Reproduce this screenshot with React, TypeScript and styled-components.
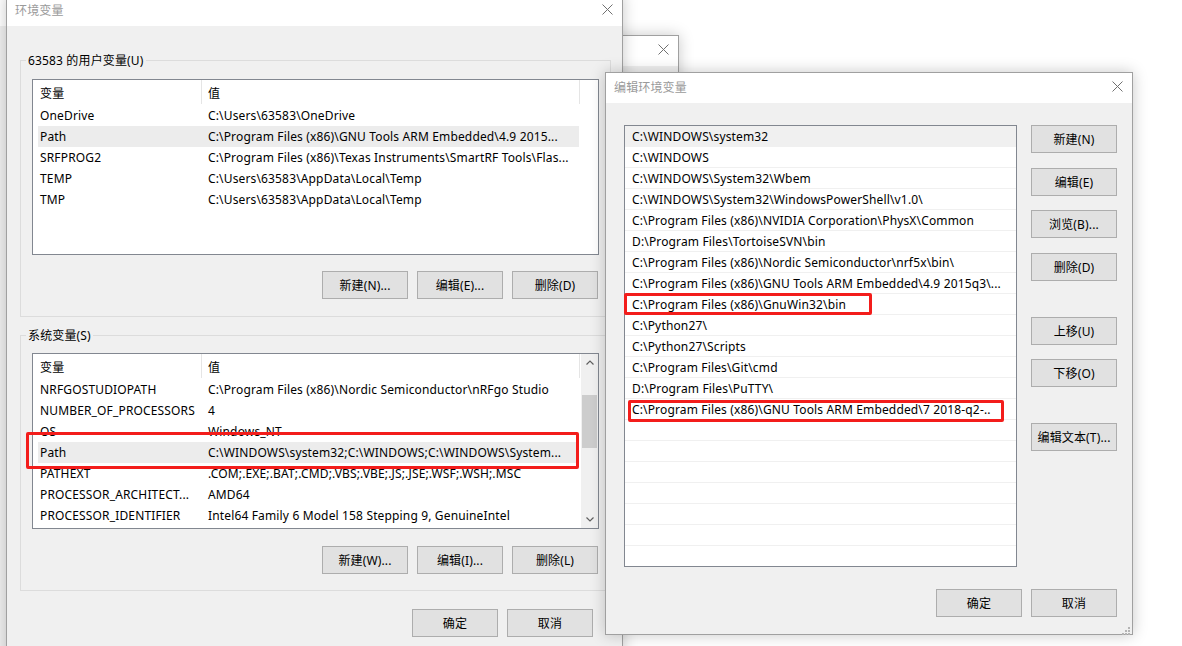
import React from "react";
import styled, { createGlobalStyle } from "styled-components";

const GlobalStyle = createGlobalStyle`
  html, body {
    margin: 0;
    padding: 0;
    background: #ffffff;
  }
  body {
    width: 1182px;
    height: 646px;
    overflow: hidden;
    font-family: "Noto Sans", "Noto Sans CJK SC", sans-serif;
    font-size: 12px;
    letter-spacing: 0.15px;
    color: #000;
  }
`;

const Desktop = styled.div`
    position: relative;
    width: 1182px;
    height: 646px;
    overflow: hidden;
    background: #ffffff;
`;

const Window = styled.div<{ $x: number; $y: number; $w: number; $h: number }>`
    position: absolute;
    left: ${p => p.$x}px;
    top: ${p => p.$y}px;
    width: ${p => p.$w}px;
    height: ${p => p.$h}px;
    box-sizing: border-box;
    background: #f0f0f0;
    border: 1px solid #a0a0a0;
    box-shadow: 0 0 14px rgba(0, 0, 0, 0.22);
    display: flex;
    flex-direction: column;
`;

const TitleBar = styled.div<{ $pad: number }>`
    box-sizing: border-box;
    height: 30px;
    flex: none;
    background: #ffffff;
    display: flex;
    align-items: center;
    justify-content: space-between;
    padding-left: ${p => p.$pad}px;
    padding-bottom: 4px;
    color: #9a9a9a;
    font-family: "Noto Sans CJK SC", sans-serif;
    font-size: 12px;
`;

const CloseBox = styled.div`
    width: 30px;
    height: 26px;
    display: flex;
    align-items: center;
    justify-content: center;
`;

const MainBody = styled.div`
    display: flex;
    flex-direction: column;
    padding: 0 11px 0 13px;
`;

const Group = styled.div<{ $top: number; $h: number; $padTop: number }>`
    position: relative;
    box-sizing: border-box;
    margin-top: ${p => p.$top}px;
    height: ${p => p.$h}px;
    border: 1px solid #dcdcdc;
    padding: ${p => p.$padTop}px 11px 0 11px;
    display: flex;
    flex-direction: column;
`;

const Legend = styled.span`
    position: absolute;
    top: -9px;
    left: 5px;
    padding: 0 2px;
    line-height: 17px;
    background: #f0f0f0;
    white-space: nowrap;
`;

const ListView = styled.div`
    box-sizing: border-box;
    height: 176px;
    border: 1px solid #828790;
    background: #ffffff;
    display: flex;
    overflow: hidden;
`;

const ListMain = styled.div`
    flex: 1;
    min-width: 0;
    display: flex;
    flex-direction: column;
`;

const Header = styled.div`
    display: flex;
    height: 25px;
    flex: none;
`;

const HeaderCell = styled.div<{ $w: number; $pad: number }>`
    box-sizing: border-box;
    width: ${p => p.$w}px;
    height: 24px;
    padding-left: ${p => p.$pad}px;
    border-right: 1px solid #e5e5e5;
    display: flex;
    align-items: center;
    font-family: "Noto Sans CJK SC", sans-serif;
`;

const Row = styled.div<{ $selected?: boolean }>`
    display: grid;
    grid-template-columns: 164px 1fr;
    height: 21px;
    width: 541px;
    margin-left: 5px;
    align-items: center;
    background: ${p => (p.$selected ? "#ececec" : "transparent")};
`;

const Cell = styled.div<{ $pad: number }>`
    padding-left: ${p => p.$pad}px;
    white-space: nowrap;
    overflow: hidden;
`;

const ScrollBar = styled.div`
    width: 17px;
    flex: none;
    background: #f0f0f0;
    display: flex;
    flex-direction: column;
    align-items: center;
`;

const ScrollArrow = styled.div`
    height: 17px;
    width: 17px;
    display: flex;
    align-items: center;
    justify-content: center;
`;

const ScrollThumb = styled.div`
    width: 15px;
    height: 53px;
    margin-top: 24px;
    background: #cdcdcd;
`;

const ScrollSpacer = styled.div`
    flex: 1;
`;

const ButtonRow = styled.div<{ $top: number; $right?: number }>`
    display: flex;
    justify-content: flex-end;
    gap: 9px;
    margin-top: ${p => p.$top}px;
    padding-right: ${p => p.$right ?? 0}px;
`;

const Button = styled.button<{ $gap?: number }>`
    box-sizing: border-box;
    width: 86px;
    height: 28px;
    margin: ${p => p.$gap ?? 0}px 0 0 0;
    padding: 0;
    background: #e1e1e1;
    border: 1px solid #adadad;
    border-radius: 0;
    color: #000;
    font-family: "Noto Sans", "Noto Sans CJK SC", sans-serif;
    font-size: 12px;
    letter-spacing: 0.15px;
    display: flex;
    align-items: center;
    justify-content: center;
    flex: none;
`;

const EditBody = styled.div`
    display: flex;
    padding: 22px 15px 0 18px;
`;

const PathList = styled.div`
    box-sizing: border-box;
    width: 393px;
    height: 442px;
    border: 1px solid #828790;
    background: #ffffff;
    overflow: hidden;
`;

const PathRow = styled.div<{ $selected?: boolean }>`
    box-sizing: border-box;
    height: 21px;
    padding-left: 7px;
    display: flex;
    align-items: center;
    white-space: nowrap;
    overflow: hidden;
    border-bottom: 1px solid #f0f0f0;
    background: ${p => (p.$selected ? "#f0f0f0" : "#ffffff")};
`;

const SideButtons = styled.div`
    display: flex;
    flex-direction: column;
    margin-left: 14px;
`;

const Grip = styled.div`
    position: absolute;
    right: 2px;
    bottom: 2px;
    width: 10px;
    height: 10px;
`;

const Mark = styled.div<{ $x: number; $y: number; $w: number; $h: number }>`
    position: absolute;
    left: ${p => p.$x}px;
    top: ${p => p.$y}px;
    width: ${p => p.$w}px;
    height: ${p => p.$h}px;
    box-sizing: border-box;
    border: 3px solid #f31d1b;
    border-radius: 2px;
`;

const CloseIcon = () => (
    <svg width="11" height="11" viewBox="0 0 11 11">
        <path d="M0.5 0.5 L10.5 10.5 M10.5 0.5 L0.5 10.5" stroke="#707070" strokeWidth="1" fill="none" />
    </svg>
);

const Chevron = ({ up }: { up: boolean }) => (
    <svg width="8" height="5" viewBox="0 0 8 5">
        <path d={up ? "M0.5 4.5 L4 1 L7.5 4.5" : "M0.5 0.5 L4 4 L7.5 0.5"} stroke="#606060" strokeWidth="1.2" fill="none" />
    </svg>
);

type Var = { name: string; value: string; selected?: boolean };

const userVars: Var[] = [
    { name: "OneDrive", value: "C:\\Users\\63583\\OneDrive" },
    { name: "Path", value: "C:\\Program Files (x86)\\GNU Tools ARM Embedded\\4.9 2015...", selected: true },
    { name: "SRFPROG2", value: "C:\\Program Files (x86)\\Texas Instruments\\SmartRF Tools\\Flas..." },
    { name: "TEMP", value: "C:\\Users\\63583\\AppData\\Local\\Temp" },
    { name: "TMP", value: "C:\\Users\\63583\\AppData\\Local\\Temp" },
];

const sysVars: Var[] = [
    { name: "NRFGOSTUDIOPATH", value: "C:\\Program Files (x86)\\Nordic Semiconductor\\nRFgo Studio" },
    { name: "NUMBER_OF_PROCESSORS", value: "4" },
    { name: "OS", value: "Windows_NT" },
    { name: "Path", value: "C:\\WINDOWS\\system32;C:\\WINDOWS;C:\\WINDOWS\\System...", selected: true },
    { name: "PATHEXT", value: ".COM;.EXE;.BAT;.CMD;.VBS;.VBE;.JS;.JSE;.WSF;.WSH;.MSC" },
    { name: "PROCESSOR_ARCHITECT...", value: "AMD64" },
    { name: "PROCESSOR_IDENTIFIER", value: "Intel64 Family 6 Model 158 Stepping 9, GenuineIntel" },
];

const paths: string[] = [
    "C:\\WINDOWS\\system32",
    "C:\\WINDOWS",
    "C:\\WINDOWS\\System32\\Wbem",
    "C:\\WINDOWS\\System32\\WindowsPowerShell\\v1.0\\",
    "C:\\Program Files (x86)\\NVIDIA Corporation\\PhysX\\Common",
    "D:\\Program Files\\TortoiseSVN\\bin",
    "C:\\Program Files (x86)\\Nordic Semiconductor\\nrf5x\\bin\\",
    "C:\\Program Files (x86)\\GNU Tools ARM Embedded\\4.9 2015q3\\...",
    "C:\\Program Files (x86)\\GnuWin32\\bin",
    "C:\\Python27\\",
    "C:\\Python27\\Scripts",
    "C:\\Program Files\\Git\\cmd",
    "D:\\Program Files\\PuTTY\\",
    "C:\\Program Files (x86)\\GNU Tools ARM Embedded\\7 2018-q2-..",
];

function VarList({ vars, scroll }: { vars: Var[]; scroll?: boolean }) {
    return (
        <ListView>
            <ListMain>
                <Header>
                    <HeaderCell $w={169} $pad={7}>变量</HeaderCell>
                    <HeaderCell $w={378} $pad={6}>值</HeaderCell>
                </Header>
                {vars.map(v => (
                    <Row key={v.name} $selected={v.selected}>
                        <Cell $pad={2}>{v.name}</Cell>
                        <Cell $pad={6}>{v.value}</Cell>
                    </Row>
                ))}
            </ListMain>
            {scroll && (
                <ScrollBar>
                    <ScrollArrow><Chevron up /></ScrollArrow>
                    <ScrollThumb />
                    <ScrollSpacer />
                    <ScrollArrow><Chevron up={false} /></ScrollArrow>
                </ScrollBar>
            )}
        </ListView>
    );
}

export default function App() {
    const rows = [...paths, ...Array(8).fill("")];
    return (
        <Desktop>
            <GlobalStyle />

            <Window $x={-300} $y={-5} $w={310} $h={700}>
                <TitleBar $pad={8} />
            </Window>

            <Window $x={300} $y={35} $w={379} $h={560}>
                <TitleBar $pad={8}>
                    <span />
                    <CloseBox><CloseIcon /></CloseBox>
                </TitleBar>
            </Window>

            <Window $x={6} $y={-5} $w={617} $h={670}>
                <TitleBar $pad={8}>
                    <span>环境变量</span>
                    <CloseBox><CloseIcon /></CloseBox>
                </TitleBar>
                <MainBody>
                    <Group $top={34} $h={257} $padTop={18}>
                        <Legend>63583 的用户变量(U)</Legend>
                        <VarList vars={userVars} />
                        <ButtonRow $top={16} $right={1}>
                            <Button>新建(N)...</Button>
                            <Button>编辑(E)...</Button>
                            <Button>删除(D)</Button>
                        </ButtonRow>
                    </Group>
                    <Group $top={18} $h={256} $padTop={17}>
                        <Legend>系统变量(S)</Legend>
                        <VarList vars={sysVars} scroll />
                        <ButtonRow $top={17} $right={1}>
                            <Button>新建(W)...</Button>
                            <Button>编辑(I)...</Button>
                            <Button>删除(L)</Button>
                        </ButtonRow>
                    </Group>
                    <ButtonRow $top={18} $right={18}>
                        <Button>确定</Button>
                        <Button>取消</Button>
                    </ButtonRow>
                </MainBody>
            </Window>

            <Window $x={605} $y={72} $w={528} $h={563}>
                <TitleBar $pad={8}>
                    <span>编辑环境变量</span>
                    <CloseBox><CloseIcon /></CloseBox>
                </TitleBar>
                <EditBody>
                    <PathList>
                        {rows.map((p, i) => (
                            <PathRow key={i} $selected={i === 0}>{p}</PathRow>
                        ))}
                    </PathList>
                    <SideButtons>
                        <Button>新建(N)</Button>
                        <Button $gap={15}>编辑(E)</Button>
                        <Button $gap={14}>浏览(B)...</Button>
                        <Button $gap={15}>删除(D)</Button>
                        <Button $gap={36}>上移(U)</Button>
                        <Button $gap={14}>下移(O)</Button>
                        <Button $gap={36}>编辑文本(T)...</Button>
                    </SideButtons>
                </EditBody>
                <ButtonRow $top={22} $right={15}>
                    <Button>确定</Button>
                    <Button>取消</Button>
                </ButtonRow>
                <Grip>
                    <svg width="10" height="10" viewBox="0 0 10 10">
                        <rect x="8" y="2" width="2" height="2" fill="#b4b4b4" />
                        <rect x="5" y="5" width="2" height="2" fill="#b4b4b4" />
                        <rect x="8" y="5" width="2" height="2" fill="#b4b4b4" />
                        <rect x="2" y="8" width="2" height="2" fill="#b4b4b4" />
                        <rect x="5" y="8" width="2" height="2" fill="#b4b4b4" />
                        <rect x="8" y="8" width="2" height="2" fill="#b4b4b4" />
                    </svg>
                </Grip>
            </Window>

            <Mark $x={26} $y={432} $w={553} $h={37} />
            <Mark $x={624} $y={293} $w={248} $h={22} />
            <Mark $x={628} $y={400} $w={376} $h={22} />
        </Desktop>
    );
}
